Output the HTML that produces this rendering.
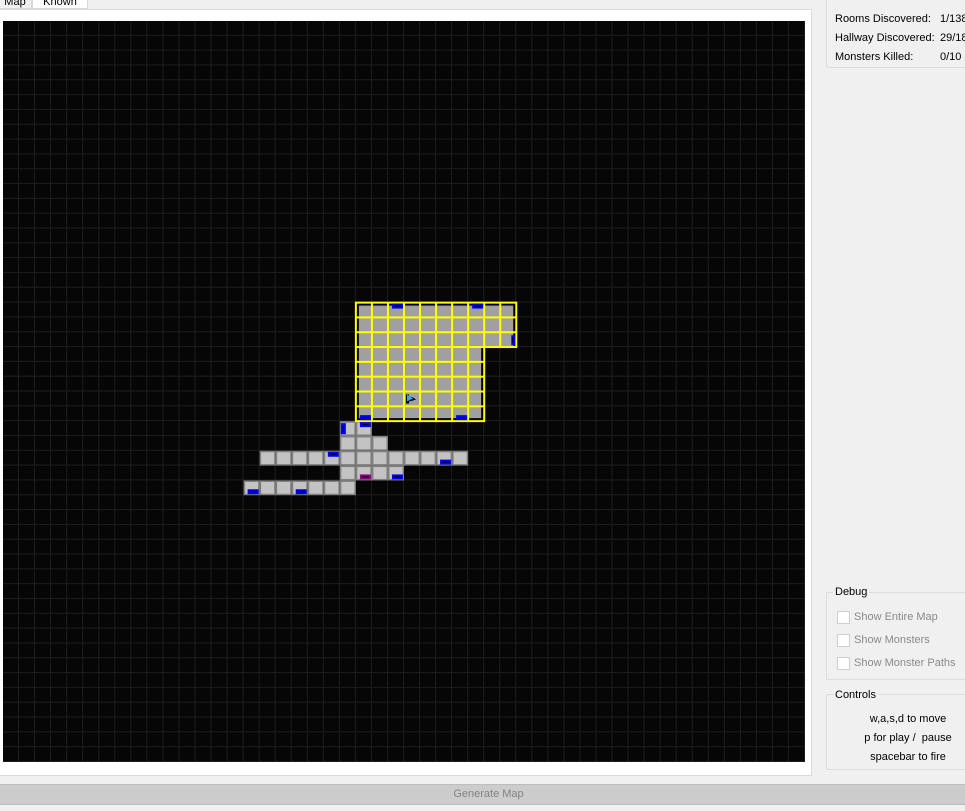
<!DOCTYPE html>
<html><head><meta charset="utf-8"><style>
*{margin:0;padding:0;box-sizing:border-box}
body{width:965px;height:811px;background:#f0f0f0;font-family:"Liberation Sans","DejaVu Sans",sans-serif;font-size:11px;color:#000;position:relative;overflow:hidden}
.abs{position:absolute}
.tab{position:absolute;top:-2px;height:11px;font-size:11px;line-height:8px;text-align:center;border:1px solid #d9d9d9;border-top:none}
.gb{position:absolute;border:1px solid #dcdcdc;border-radius:2px}
.gb .t{position:absolute;top:-8px;left:6px;background:#f0f0f0;padding:0 2px;font-size:11px}
.cb{position:absolute;left:10px;width:13px;height:13px;border:1px solid #cfcfcf;background:#fff}
.cl{position:absolute;left:27px;color:#8a8a8a;font-size:11px}
</style></head><body>
<div class="tab" style="left:-2px;width:34px;background:#f0f0f0">Map</div>
<div class="tab" style="left:32px;width:56px;background:#fff;border-color:#d9d9d9">Known</div>
<div class="abs" style="left:-1px;top:9px;width:813px;height:767px;background:#fff;border:1px solid #dadada"></div>
<svg class="abs" style="left:0;top:0" width="812" height="770" id="m">
<defs><pattern id="g" x="3" y="21" width="16.04" height="14.82" patternUnits="userSpaceOnUse">
<rect width="16.04" height="14.82" fill="#060606"/>
<rect x="15.04" y="0" width="2" height="14.82" fill="#1d1d1d"/>
<rect x="0" y="13.82" width="16.04" height="2" fill="#1d1d1d"/>
</pattern></defs>
<rect x="3" y="21" width="802" height="741" fill="url(#g)"/>
<g id="c"></g>
</svg>
<div class="gb" style="left:826px;top:-5px;width:145px;height:73px;">
<div class="abs" style="left:8px;top:14px;line-height:19px;font-size:11px">Rooms Discovered:<br>Hallway Discovered:<br>Monsters Killed:</div>
<div class="abs" style="left:113px;top:14px;line-height:19px;font-size:11px;white-space:nowrap">1/138<br>29/18<br>0/10</div>
</div>
<div class="gb" style="left:826px;top:592px;width:145px;height:88px"><div class="t" style="top:-7px">Debug</div>
<div class="cb" style="top:18px"></div><div class="cl" style="top:18px">Show Entire Map</div>
<div class="cb" style="top:41px"></div><div class="cl" style="top:41px">Show Monsters</div>
<div class="cb" style="top:64px"></div><div class="cl" style="top:64px">Show Monster Paths</div>
</div>
<div class="gb" style="left:826px;top:694px;width:145px;height:76px"><div class="t" style="top:-6px">Controls</div>
<div class="abs" style="left:0;width:162px;top:15px;text-align:center;line-height:19px;font-size:11px">w,a,s,d to move<br>p for play / &nbsp;pause<br>spacebar to fire</div>
</div>
<div class="abs" style="left:0;top:784px;width:965px;height:21px;background:#cccccc;border-top:1px solid #bdbdbd;border-bottom:1px solid #bdbdbd;text-align:center;line-height:19px;color:#838383;font-size:11px"><span style="position:relative;left:6px">Generate Map</span></div>
<script>
var g=document.getElementById('c'),NS='http://www.w3.org/2000/svg',cw=16.04,ch=14.82;
function X(c){return 3+c*cw}function Y(r){return 21+r*ch}
function R(x,y,w,h,f){var e=document.createElementNS(NS,'rect');e.setAttribute('x',x);e.setAttribute('y',y);e.setAttribute('width',w);e.setAttribute('height',h);e.setAttribute('fill',f);g.appendChild(e)}
function hall(c,r){R(X(c),Y(r),cw,ch,'#808080');R(X(c)+1.5,Y(r)+1.5,cw-3,ch-3,'#c3c3c3')}
var H=[[21,27],[22,27],[21,28],[22,28],[23,28]];
for(var c=16;c<=28;c++)H.push([c,29]);
for(c=21;c<=24;c++)H.push([c,30]);
for(c=15;c<=21;c++)H.push([c,31]);
H.forEach(function(p){hall(p[0],p[1])});
// room
R(X(22),Y(19),10*cw,3*ch,'#000');R(X(22),Y(22),8*cw,5*ch,'#000');
R(X(22)+3,Y(19)+3,10*cw-6,3*ch-3,'#a0a0a0');R(X(22)+3,Y(22)-1,8*cw-6,5*ch-2,'#a0a0a0');
var Yc='#ffff00';
for(var r=20;r<=26;r++){var n=r<=22?10:8;R(X(22),Y(r)-1,n*cw,2,Yc)}
for(c=23;c<=31;c++){var bot=c<30?Y(27):Y(22);R(X(c)-1,Y(19),2,bot-Y(19),Yc)}
var p=document.createElementNS(NS,'path');p.setAttribute('d','M'+X(22)+' '+Y(19)+'H'+X(32)+'V'+Y(22)+'H'+X(30)+'V'+Y(27)+'H'+X(22)+'Z');p.setAttribute('fill','none');p.setAttribute('stroke',Yc);p.setAttribute('stroke-width','2');g.appendChild(p);
function door(c,r,pos,col){col=col||'#0000f0';var x=X(c),y=Y(r);
if(pos=='t'){R(x+4,y+1,11,5,col);R(x+6,y+3,7,1,'#000')}
else if(pos=='b'){R(x+4,y+ch-6,11,5,col);R(x+6,y+ch-4,7,1,'#000')}
else if(pos=='r'){R(x+cw-5,y+3,4,10,col);R(x+cw-4,y+5,1,6,'#000')}
else if(pos=='l'){R(x+1,y+2,5,11,col);R(x+3,y+4,1,7,'#000')}}
door(24,19,'t');door(29,19,'t');door(31,21,'r');door(22,26,'b');door(28,26,'b');
door(21,27,'l');door(22,27,'t');door(20,29,'t');door(27,29,'b');door(22,30,'b','#8b0080');door(24,30,'b');door(15,31,'b');door(18,31,'b');
var t=document.createElementNS(NS,'path');var px=X(25)+2,py=Y(25)+2;t.setAttribute('d','M'+px+' '+py+'l0 10l3 0l0-2l4-1l3-1l-3-2l-4-1l0-2l-3 0z');t.setAttribute('fill','#000');g.appendChild(t);
var t2=document.createElementNS(NS,'path');t2.setAttribute('d','M'+(px+1)+' '+(py+1)+'l0 7l6-3z');t2.setAttribute('fill','#20b0e8');g.appendChild(t2);
</script>
</body></html>
